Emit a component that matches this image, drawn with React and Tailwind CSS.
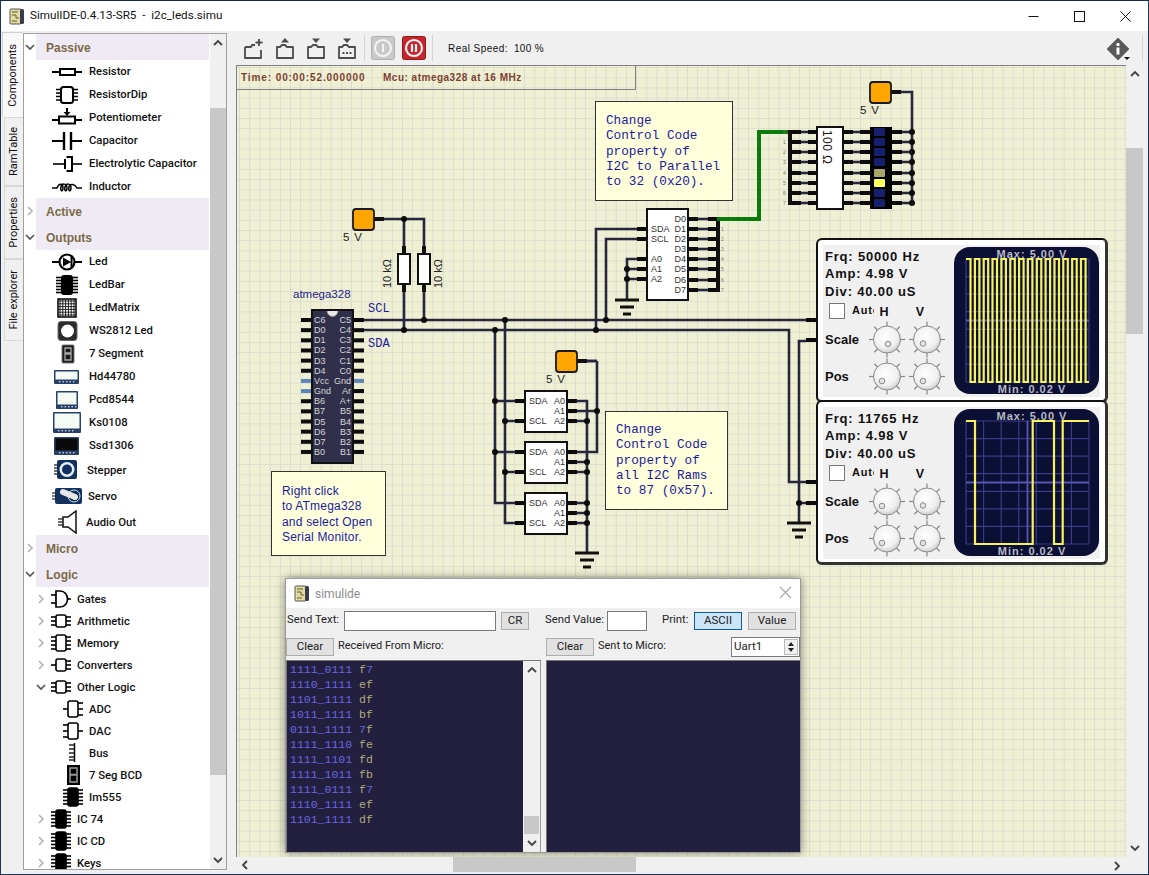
import React from "react";

const Svg = ({ w = 30, h = 22, children }) => (
  <svg width={w} height={h} viewBox={`0 0 ${w} ${h}`} className="shrink-0 block">{children}</svg>
);
const Ln = (p) => <line stroke="#000" strokeWidth="2" {...p} />;

const Chip = ({ l = 3, r = 3, top = 5, bot = 17, fill = false, w = 20, x0 = 0 }) => {
  const ys = (n) => n === 1 ? [(top + bot) / 2] : Array.from({ length: n }, (_, i) => top + 2 + (i * (bot - top - 4)) / (n - 1));
  return (
    <svg width={w} height="22" viewBox={`0 0 ${w} 22`} className="shrink-0 block">
      <g transform={`translate(${x0} 0)`}>
        {ys(l).map((y, i) => <line key={"l" + i} x1="0" x2="5" y1={y} y2={y} stroke="#000" strokeWidth="1.6" />)}
        {ys(r).map((y, i) => <line key={"r" + i} x1="15" x2="20" y1={y} y2={y} stroke="#000" strokeWidth="1.6" />)}
        <rect x="5" y={top} width="10" height={bot - top} rx="2" fill={fill ? "#000" : "#fff"} stroke="#000" strokeWidth="1.6" />
      </g>
    </svg>
  );
};

const Display = ({ x, y, w, h, dark }) => (
  <Svg>
    <rect x={x} y={y} width={w} height={h} rx="1" fill="#26406a" />
    <rect x={x + 1.5} y={y + 1.5} width={w - 3} height={h - 6} fill={dark ? "#0a0a0a" : "#f4fbf4"} />
    <g fill="#cfd8e4">
      {[0, 1, 2, 3, 4].map((i) => <rect key={i} x={x + 5 + i * 3.5} y={y + h - 3} width="1.4" height="1.4" />)}
    </g>
  </Svg>
);

const icons = {
  Resistor: <Svg><Ln x1="0" x2="8" y1="11" y2="11" /><rect x="8" y="8" width="15" height="6" fill="#fff" stroke="#000" strokeWidth="2" /><Ln x1="23" x2="30" y1="11" y2="11" /></Svg>,
  ResistorDip: <Svg><g stroke="#000" strokeWidth="1.5">{[5, 8.5, 12, 15.5].map((y) => <g key={y}><line x1="4" x2="9" y1={y + 0.5} y2={y + 0.5} /><line x1="21" x2="26" y1={y + 0.5} y2={y + 0.5} /></g>)}</g><rect x="9" y="3" width="12" height="16" rx="2.5" fill="#fff" stroke="#000" strokeWidth="2" /></Svg>,
  Potentiometer: <Svg><Ln x1="0" x2="7" y1="13" y2="13" /><rect x="7" y="9.5" width="16" height="7" fill="#fff" stroke="#000" strokeWidth="2" /><Ln x1="23" x2="30" y1="13" y2="13" /><Ln x1="15" x2="15" y1="1" y2="6" /><path d="M11.5 5 H18.5 L15 9 Z" fill="#000" /></Svg>,
  Capacitor: <Svg><Ln x1="0" x2="12" y1="11" y2="11" /><Ln x1="12" x2="12" y1="2" y2="20" strokeWidth="2.4" /><Ln x1="19" x2="19" y1="2" y2="20" strokeWidth="2.4" /><Ln x1="19" x2="30" y1="11" y2="11" /></Svg>,
  Electrolytic: <Svg><Ln x1="1" x2="13" y1="11" y2="11" strokeWidth="1.6" /><Ln x1="13" x2="13" y1="6" y2="16" /><path d="M14.5 4 H20 V18 H14.5" fill="none" stroke="#000" strokeWidth="2" /><Ln x1="20" x2="30" y1="11" y2="11" strokeWidth="1.6" /></Svg>,
  Inductor: <Svg><path d="M0 12 H5 C7 7 11 7 11 12 C11 16 8 16 9 11 C10 7 15 7 15 12 C15 16 12 16 13 11 C14 7 19 7 19 12 C19 16 16 16 17 11 C18 7 23 8 25 12 H30" fill="none" stroke="#000" strokeWidth="1.5" /></Svg>,
  Led: <Svg><Ln x1="0" x2="8" y1="11" y2="11" /><Ln x1="22" x2="30" y1="11" y2="11" /><circle cx="15" cy="11" r="7.5" fill="#fff" stroke="#000" strokeWidth="2.2" /><path d="M11 6.5 L19 11 L11 15.5 Z" fill="#000" /><Ln x1="19.5" x2="19.5" y1="6" y2="16" /></Svg>,
  LedBar: <Svg><g stroke="#000" strokeWidth="1.6">{[3.5, 6.5, 9.5, 12.5, 15.5, 18.5].map((y) => <line key={y} x1="4" x2="26" y1={y} y2={y} />)}</g><rect x="9" y="1" width="12" height="20" rx="3" fill="#000" /></Svg>,
  LedMatrix: <Svg><rect x="6" y="2" width="18" height="18" fill="#fff" stroke="#000" strokeWidth="1.5" />{[0, 1, 2, 3, 4, 5].map((i) => <g key={i} stroke="#222" strokeWidth="1"><line x1={8 + i * 2.8} x2={8 + i * 2.8} y1="2" y2="20" /><line y1={4 + i * 2.8} y2={4 + i * 2.8} x1="6" x2="24" /></g>)}</Svg>,
  WS: <Svg><rect x="6" y="1.5" width="19" height="19" rx="3" fill="#2c2c2c" stroke="#666" /><circle cx="15.5" cy="11" r="6.5" fill="#fff" /></Svg>,
  Seg: <Svg><rect x="10" y="2" width="12" height="18" rx="1" fill="#1a1a1a" stroke="#777" /><path d="M13 5 H19 V10 H13 Z M13 11 H19 V17 H13 Z" fill="none" stroke="#aaa" strokeWidth="1.3" /></Svg>,
  Hd: <Display x={2} y={4} w={25} h={14} />,
  Pcd: <Display x={4} y={2} w={22} h={18} />,
  Ks: <Display x={1} y={0} w={28} h={21} />,
  Ssd: <Display x={2} y={2} w={25} h={18} dark />,
  Stepper: <Svg h={24}><g stroke="#222" strokeWidth="1.3">{[7, 10, 13, 16].map((y) => <line key={y} x1="2" x2="6" y1={y} y2={y} />)}</g><rect x="5" y="2" width="20" height="19" rx="2" fill="#12315e" /><circle cx="15" cy="11.5" r="7.5" fill="#e6eef6" /><circle cx="15" cy="11.5" r="5" fill="#12315e" /></Svg>,
  Servo: <Svg h={22}><g stroke="#222" strokeWidth="1.2">{[8, 11, 14].map((y) => <line key={y} x1="0" x2="3" y1={y} y2={y} />)}</g><rect x="3" y="3" width="27" height="16" rx="2" fill="#12315e" /><circle cx="22" cy="11" r="6" fill="none" stroke="#cfe0ee" strokeWidth="1" /><line x1="11" y1="7" x2="23" y2="12" stroke="#e8e8e8" strokeWidth="6" strokeLinecap="round" /></Svg>,
  Audio: <Svg h={24}><g stroke="#222" strokeWidth="1.3">{[9, 12, 15].map((y) => <line key={y} x1="6" x2="11" y1={y} y2={y} />)}</g><path d="M11 7 H16 L24 1 V23 L16 17 H11 Z" fill="#fff" stroke="#111" strokeWidth="1.5" /></Svg>,
  Gates: <svg width="20" height="22" viewBox="0 0 20 22" className="shrink-0"><g stroke="#000" strokeWidth="1.6"><line x1="0" x2="5" y1="7" y2="7" /><line x1="0" x2="5" y1="15" y2="15" /><line x1="15" x2="20" y1="11" y2="11" /></g><path d="M5 3 H9 C19 3 19 19 9 19 H5 Z" fill="#fff" stroke="#000" strokeWidth="1.7" /></svg>,
  Arithmetic: <Chip />,
  Memory: <Chip l={4} r={4} top={3} bot={19} />,
  Converters: <Chip l={1} />,
  OtherLogic: <Chip />,
  ADC: <Chip l={1} top={3} bot={19} />,
  DAC: <Chip r={1} top={3} bot={19} />,
  Bus: <svg width="20" height="22" viewBox="0 0 20 22" className="shrink-0"><g stroke="#000" strokeWidth="1.3">{[3, 7, 11, 15, 18].map((y) => <line key={y} x1="6" x2="11" y1={y} y2={y} />)}</g><line x1="11.5" x2="11.5" y1="1" y2="20" stroke="#000" strokeWidth="1.5" /></svg>,
  SegBCD: <svg width="20" height="22" viewBox="0 0 20 22" className="shrink-0"><rect x="4" y="1" width="13" height="20" fill="#000" /><path d="M7 4 H14 V10.5 H7 Z M7 11 H14 V18 H7 Z" fill="none" stroke="#999" strokeWidth="1.5" /></svg>,
  Ic: <Chip l={5} r={5} top={2} bot={20} fill />,
};

const Chev = ({ open, light }) => (
  <svg width="12" height="12" viewBox="0 0 12 12" className="shrink-0">
    <polyline points={open ? "2,4 6,8 10,4" : "4,2 8,6 4,10"} fill="none" stroke={light ? "#b5b5b5" : "#555"} strokeWidth="1.7" />
  </svg>
);

const listText = "text-[11.3px] font-medium text-[#111] whitespace-nowrap pt-[2px] font-['Roboto',sans-serif]";

const Header = ({ label, open }) => (
  <div className="flex items-center h-[26px]">
    <Chev open={open} light={!open} />
    <div className="h-full w-[173px] bg-[#f0eaf4] flex items-center pl-[10px] pt-[2px] text-[12px] font-bold text-[#7b6a47]">{label}</div>
  </div>
);

const Item = ({ label, icon, h = "h-[23px]", gap = "gap-[7px]", pl = "pl-[28px]" }) => (
  <div className={`flex items-center ${h} ${gap} ${pl}`}>
    {icon}
    <span className={listText}>{label}</span>
  </div>
);

const Group = ({ label, icon, open }) => (
  <div className="flex items-center h-[22px] pl-[11px]">
    <Chev open={open} light={!open} />
    <div className="ml-[4px] mr-[6px]">{icon}</div>
    <span className={listText}>{label}</span>
  </div>
);

const Sub = ({ label, icon }) => (
  <div className="flex items-center h-[22px] pl-[39px] gap-[6px]">
    {icon}
    <span className={listText}>{label}</span>
  </div>
);

const Arrow = ({ up }) => (
  <div className="h-[17px] w-full flex items-center justify-center shrink-0">
    <svg width="10" height="7" viewBox="0 0 10 7">
      <polyline points={up ? "1,6 5,2 9,6" : "1,1 5,5 9,1"} fill="none" stroke="#444" strokeWidth="1.8" />
    </svg>
  </div>
);

const Tab = ({ label, h, on }) => (
  <div className={`${h} flex items-center justify-center ${on ? "ml-[1px] w-[21px] bg-[#f8f8f8] border-t border-l border-[#d0d0d0]" : "ml-[3px] w-[19px] bg-[#f0f0f0] border border-r-0 border-[#d8d8d8]"}`}>
    <span className="[writing-mode:vertical-rl] rotate-180 text-[11px] text-[#111] whitespace-nowrap font-['Roboto',sans-serif]">{label}</span>
  </div>
);

const Sep = ({ cls }) => <div className={`w-px h-[26px] bg-[#d4d4d4] ${cls}`} />;

const ToolIcon = ({ kind }) => (
  <svg width="22" height="24" viewBox="0 0 22 24" className="shrink-0">
    <path d={kind === "new" ? "M2 11 H8 L9 9 H12 M2 11 V22 H18 V14" : "M3 11 H6 L8 9 H11 L13 11 H19 V22 H3 Z"} fill="none" stroke="#4c4c4c" strokeWidth="1.8" strokeLinejoin="round" />
    {kind === "new" && <path d="M16 3 V10 M12.5 6.5 H19.5" stroke="#4c4c4c" strokeWidth="1.8" />}
    {kind === "up" && <path d="M11 2 L15 6.5 H7 Z" fill="#4c4c4c" />}
    {(kind === "down" || kind === "as") && <path d="M7 2.5 H15 L11 7 Z" fill="#4c4c4c" />}
    {kind === "as" && <path d="M6.5 17 H8.5 M10 17 H12 M13.5 17 H15.5" stroke="#4c4c4c" strokeWidth="2" />}
  </svg>
);

const PowerBtn = ({ red }) => (
  <svg width="24" height="24" viewBox="0 0 24 24" className="shrink-0">
    <rect x="0.5" y="0.5" width="23" height="23" rx="2" fill={red ? "#c9242c" : "#c9c9c9"} stroke={red ? "#8c1c1c" : "#b0b0b0"} />
    <circle cx="12" cy="12" r="8" fill="none" stroke="#f4f4f4" strokeWidth="2.2" />
    {red ? <path d="M10 8 V16 M14 8 V16" stroke="#f4f4f4" strokeWidth="2.2" /> : <path d="M12 8 V16" stroke="#f4f4f4" strokeWidth="2.2" />}
  </svg>
);

/* ---------- circuit ---------- */
const Wire = ({ d, color = "#26263c", w = 2.6 }) => <path d={d} fill="none" stroke={color} strokeWidth={w} strokeLinejoin="miter" />;
const Pin = ({ x1, x2, y, c = "#0c0c0c" }) => <line x1={x1} x2={x2} y1={y} y2={y} stroke={c} strokeWidth="4" />;
const Dot = ({ x, y }) => <circle cx={x} cy={y} r="3" fill="#0c0c0c" />;
const Gnd = ({ x, y }) => (
  <g stroke="#111">
    <line x1={x - 12} x2={x + 12} y1={y} y2={y} strokeWidth="3" />
    <line x1={x - 7} x2={x + 7} y1={y + 7} y2={y + 7} strokeWidth="3" />
    <line x1={x - 4} x2={x + 4} y1={y + 14} y2={y + 14} strokeWidth="3" />
  </g>
);
const Power = ({ x, y }) => (
  <g>
    <line x1={x + 21} x2={x + 31} y1={y + 10} y2={y + 10} stroke="#111" strokeWidth="4" />
    <rect x={x} y={y} width="21" height="21" rx="3" fill="#ffa500" stroke="#1a1a1a" strokeWidth="1.8" />
    <text x={x - 10} y={y + 32} fontSize="11.5" letterSpacing="0.8" fill="#222" fontFamily="'Liberation Sans',sans-serif">5 V</text>
  </g>
);
const Txt = ({ x, y, t, end, fill = "#333", size = 9 }) => (
  <text x={x} y={y + 3} fontSize={size} fill={fill} textAnchor={end ? "end" : "start"} fontFamily="'Liberation Sans',sans-serif">{t}</text>
);

const mcuL = ["C6", "D0", "D1", "D2", "D3", "D4", "Vcc", "Gnd", "B6", "B7", "D5", "D6", "D7", "B0"];
const mcuR = ["C5", "C4", "C3", "C2", "C1", "C0", "Gnd", "Ar", "A+", "B5", "B4", "B3", "B2", "B1"];
const mcuY = (i) => 320 + i * 10.15;

const Ram = ({ y }) => (
  <g>
    <Pin x1={515} x2={525} y={y + 10} />
    <Pin x1={515} x2={525} y={y + 30} />
    <Pin x1={567} x2={577} y={y + 10} />
    <Pin x1={567} x2={577} y={y + 20} />
    <Pin x1={567} x2={577} y={y + 30} />
    <rect x="525" y={y} width="42" height="41" fill="#fff" stroke="#111" strokeWidth="2" />
    <Txt x={529} y={y + 10} t="SDA" />
    <Txt x={529} y={y + 30} t="SCL" />
    <Txt x={565} y={y + 10} t="A0" end />
    <Txt x={565} y={y + 20} t="A1" end />
    <Txt x={565} y={y + 30} t="A2" end />
  </g>
);

const dY = [219, 229, 239, 249, 259, 269, 280, 290];
const bY = [132, 142, 152, 162, 173, 183, 193, 203];

const Circuit = () => (
  <svg width="889" height="791" viewBox="237 66 889 791" className="absolute left-0 top-0 block">
    <defs>
      <pattern id="grid" x="239.1" y="67.1" width="10.18" height="10.18" patternUnits="userSpaceOnUse">
        <path d="M0 0 H10.18 M0 0 V10.18" stroke="#d8d8d0" strokeWidth="1.6" fill="none" />
      </pattern>
    </defs>
    <rect x="237" y="66" width="889" height="791" fill="#eff0d3" />
    <rect x="237" y="66" width="889" height="791" fill="url(#grid)" />

    {/* top-left power and pull ups */}
    <Wire d="M384 219 H424 V254 M404 219 V254 M404 284 V330 M424 284 V320" />
    <Dot x={404} y={219} />
    <Power x={353} y={209} />
    {[404, 424].map((x) => (
      <g key={x}>
        <line x1={x} x2={x} y1="246" y2="254" stroke="#111" strokeWidth="4" />
        <line x1={x} x2={x} y1="284" y2="292" stroke="#111" strokeWidth="4" />
        <rect x={x - 6} y="254" width="12" height="30" fill="#fff" stroke="#111" strokeWidth="2" />
      </g>
    ))}
    <text transform="translate(391 288) rotate(-90)" fontSize="11" fill="#222" fontFamily="'Liberation Sans',sans-serif">10 kΩ</text>
    <text transform="translate(442 288) rotate(-90)" fontSize="11" fill="#222" fontFamily="'Liberation Sans',sans-serif">10 kΩ</text>

    {/* bus wires */}
    <Wire d="M364 320 H806 M364 330 H789 V482 H806" />
    <Wire d="M799 522 V341 H806 M799 503 H806" />
    <Wire d="M495 330 V503 H515 M505 320 V523 H515 M495 401 H515 M495 452 H515 M505 421 H515 M505 472 H515" />
    <Wire d="M596 330 V229 H637 M606 320 V239 H637" />
    <Wire d="M627 300 V259 H637 M627 269 H637 M627 279 H637" />
    <Wire d="M577 401 H587 V553 M577 421 H587 M577 462 H587 M577 472 H587 M577 503 H587 M577 513 H587 M577 523 H587" />
    <Wire d="M577 411 H597 M597 361 V452 H577 M587 361 H597" />

    {/* atmega */}
    {mcuL.map((t, i) => <Pin key={"pl" + i} x1={301} x2={312} y={mcuY(i)} c={i === 6 || i === 7 ? "#5b87b8" : "#0c0c0c"} />)}
    {mcuR.map((t, i) => <Pin key={"pr" + i} x1={353} x2={364} y={mcuY(i)} c={i === 6 ? "#5b87b8" : "#0c0c0c"} />)}
    <rect x="312" y="310" width="41" height="153" fill="#30304a" stroke="#111" strokeWidth="2" />
    <path d="M327 311 A5.5 5.5 0 0 0 338 311" fill="#e8e8e8" stroke="#888" strokeWidth="1" />
    {mcuL.map((t, i) => <Txt key={"tl" + i} x={314} y={mcuY(i)} t={t} fill="#d6d6d6" />)}
    {mcuR.map((t, i) => <Txt key={"tr" + i} x={351} y={mcuY(i)} t={t} end fill="#d6d6d6" />)}
    <text x="293" y="298" fontSize="11.5" fill="#1a1a8a" fontFamily="'Liberation Sans',sans-serif">atmega328</text>
    <text x="368" y="312" fontSize="12" fill="#1a1a9a" fontFamily="'Liberation Mono',monospace">SCL</text>
    <text x="368" y="347" fontSize="12" fill="#1a1a9a" fontFamily="'Liberation Mono',monospace">SDA</text>

    <Dot x={404} y={330} /><Dot x={424} y={320} /><Dot x={495} y={330} /><Dot x={505} y={320} />
    <Dot x={596} y={330} /><Dot x={606} y={320} />
    {[401, 452].map((y) => <Dot key={y} x={495} y={y} />)}
    {[421, 472].map((y) => <Dot key={y} x={505} y={y} />)}
    {[421, 462, 472, 503, 513, 523].map((y) => <Dot key={y} x={587} y={y} />)}
    <Dot x={597} y={411} />
    <Dot x={627} y={269} /><Dot x={627} y={279} />
    <Dot x={799} y={503} />

    {/* rams */}
    <Ram y={391} /><Ram y={442} /><Ram y={493} />
    <Gnd x={587} y={553} />
    <Power x={556} y={351} />
    <Wire d="M587 361 H597" />
    <Gnd x={799} y={523} />
    <Gnd x={627} y={300} />

    {/* i2c to parallel */}
    {[229, 239, 259, 269, 279].map((y) => <Pin key={y} x1={637} x2={647} y={y} />)}
    {dY.map((y) => (
      <g key={y}>
        <Pin x1={688} x2={698} y={y} />
        <Wire d={`M698 ${y} H708`} />
        <Pin x1={708} x2={718} y={y} />
      </g>
    ))}
    <rect x="647" y="209" width="41" height="91" fill="#fff" stroke="#111" strokeWidth="2" />
    {[["SDA", 229], ["SCL", 239], ["A0", 259], ["A1", 269], ["A2", 279]].map(([t, y]) => <Txt key={t} x={651} y={y} t={t} />)}
    {dY.map((y, i) => <Txt key={y} x={686} y={y} t={"D" + i} end />)}
    <line x1="718" x2="718" y1="217" y2="292" stroke="#111" strokeWidth="4" />
    {dY.map((y, i) => <text key={y} x="721" y={y + 2} fontSize="5" fill="#777">{i}</text>)}
    <path d="M717 219 H759 V132 H791" fill="none" stroke="#0a7a0a" strokeWidth="4" />

    {/* bar led */}
    <line x1="790" x2="790" y1="130" y2="205" stroke="#111" strokeWidth="4" />
    {bY.map((y, i) => <text key={y} x="783" y={y + 2} fontSize="5" fill="#777">{i}</text>)}
    {bY.map((y) => (
      <g key={y}>
        <Pin x1={791} x2={801} y={y} />
        <Wire d={`M801 ${y} H808`} />
        <Pin x1={808} x2={817} y={y} />
        <Pin x1={843} x2={853} y={y} />
        <Wire d={`M853 ${y} H860`} />
        <Pin x1={860} x2={870} y={y} />
        <Pin x1={892} x2={902} y={y} />
        <Wire d={`M902 ${y} H912`} />
      </g>
    ))}
    <rect x="817" y="127" width="26" height="82" fill="#fff" stroke="#111" strokeWidth="2" />
    <text transform="translate(823 130) rotate(90)" fontSize="12" letterSpacing="0.4" fill="#111" fontFamily="'Liberation Sans',sans-serif">100 Ω</text>
    <rect x="870" y="127" width="22" height="82" fill="#000" />
    {bY.map((y, i) => <rect key={y} x="874" y={y - 4} width="11" height="8" rx="1" fill={i === 4 ? "#a9a66a" : i === 5 ? "#ffff60" : "#16206e"} />)}
    <Wire d="M901 92 H912 V203" />
    {bY.map((y) => <Dot key={y} x={912} y={y} />)}
    <Power x={870} y={82} />

    {/* scope inputs */}
    {[320, 340, 482, 503].map((y) => <Pin key={y} x1={806} x2={816} y={y} />)}
  </svg>
);

const Note = ({ cls, children }) => (
  <div className={`absolute bg-[#ffffdc] border border-[#333] text-[#1a1a9e] whitespace-pre ${cls}`}>{children}</div>
);

const Dial = ({ dx, dy }) => (
  <svg width="36" height="37" viewBox="-18 -18.5 36 37" className="block shrink-0 overflow-visible">
    <defs>
      <radialGradient id="knob" cx="45%" cy="40%" r="65%">
        <stop offset="0%" stopColor="#ffffff" />
        <stop offset="65%" stopColor="#f0f0f0" />
        <stop offset="100%" stopColor="#c4c4c4" />
      </radialGradient>
    </defs>
    {[0, 45, 90, 135, 180, 225, 270, 315].map((a) => (
      <line key={a} x1="0" x2="0" y1="-12" y2="-18" stroke="#888" strokeWidth="1.2" transform={`rotate(${a})`} />
    ))}
    <circle r="13.5" fill="url(#knob)" stroke="#8a8a8a" strokeWidth="1" />
    <circle cx={dx} cy={dy} r="2.8" fill="#e4e4e4" stroke="#8c8c8c" strokeWidth="1" />
  </svg>
);

const wave1 = () => {
  let d = "M12 12";
  for (let k = 0; k < 14; k++) {
    const f = 16.5 + k * 8.85;
    const r = 12 + (k + 1) * 8.85;
    d += ` H${f.toFixed(1)} V135 H${Math.min(r, 135).toFixed(1)}`;
    if (r < 134) d += " V12";
  }
  return d;
};
const wave2 = "M12 12 H21 V135 H78.7 V12 H100 V135 H108.7 V12 H135";

const Screen = ({ wave }) => (
  <svg width="145" height="147" viewBox="0 0 145 147" className="block shrink-0">
    <rect x="0" y="0" width="145" height="147" rx="16" fill="#0b0f33" />
    {Array.from({ length: 8 }, (_, i) => 12 + i * 17.57).map((p) => (
      <g key={p} stroke="#3a3a86" strokeWidth="1.2">
        <line x1={p} x2={p} y1="12" y2="135" />
        <line y1={p} y2={p} x1="12" x2="135" />
      </g>
    ))}
    <line x1="73.5" x2="73.5" y1="12" y2="135" stroke="#5757b0" strokeWidth="1.8" />
    <line y1="73.5" y2="73.5" x1="12" x2="135" stroke="#5757b0" strokeWidth="1.8" />
    <path d={wave} fill="none" stroke="#f5f25e" strokeWidth="2.2" />
    <text x="78" y="11" textAnchor="middle" fontSize="11" fontWeight="700" letterSpacing="1" fill="#b9b9c6" fontFamily="'Liberation Sans',sans-serif">Max: 5.00 V</text>
    <text x="78" y="146" textAnchor="middle" fontSize="11" fontWeight="700" letterSpacing="1" fill="#b9b9c6" fontFamily="'Liberation Sans',sans-serif">Min: 0.02 V</text>
  </svg>
);

const Scope = ({ cls, frq, wave, firstX }) => (
  <div className={`absolute left-[579px] w-[292px] h-[165px] bg-white border-2 border-[#111] border-r-[3px] border-b-[3px] border-r-[#333] border-b-[#333] rounded-md p-[5px] ${cls}`}>
    <div className="bg-[#f0f0f0] w-[277px] h-[152px] flex">
      <div className="w-[131px] pl-[2px] pt-[3px] shrink-0 text-[#111] font-bold">
        <div className="text-[13px] tracking-[0.8px] leading-[17.4px] whitespace-nowrap">Frq: {frq} Hz</div>
        <div className="text-[13px] tracking-[0.8px] leading-[17.4px] whitespace-nowrap">Amp: 4.98 V</div>
        <div className="text-[13px] tracking-[0.8px] leading-[17.4px] whitespace-nowrap">Div: 40.00 uS</div>
        <div className="flex items-center h-[21px] relative">
          <div className="ml-[4px] w-[16px] h-[16px] bg-white border border-[#777]" />
          <div className="ml-[7px] w-[22px] overflow-hidden text-[11px] tracking-[0.8px] whitespace-nowrap">Auto</div>
          <div className="ml-[3px] w-[14px] text-center text-[12.5px] mt-[4px]">H</div>
          <div className="ml-[22px] w-[14px] text-center text-[12.5px] mt-[4px]">V</div>
        </div>
        <div className="flex items-center h-[37px]">
          <div className="w-[44px] text-[13px]">Scale</div>
          <Dial dx={firstX} dy={4.5} />
          <div className="w-[4px]" />
          <Dial dx={-4} dy={4} />
        </div>
        <div className="flex items-center h-[37px]">
          <div className="w-[44px] text-[13px]">Pos</div>
          <Dial dx={-5} dy={4.5} />
          <div className="w-[4px]" />
          <Dial dx={-4} dy={4.5} />
        </div>
      </div>
      <div className="pt-[2px]"><Screen wave={wave} /></div>
    </div>
  </div>
);

const Btn = ({ cls, children, on }) => (
  <div className={`flex items-center justify-center h-[18px] shrink-0 text-[11.5px] text-[#222] border ${on ? "bg-[#cce4f7] border-[#0a5c9e]" : "bg-[#e1e1e1] border-[#adadad]"} ${cls}`}>{children}</div>
);

const log = ["1111_0111 f7", "1110_1111 ef", "1101_1111 df", "1011_1111 bf", "0111_1111 7f", "1111_1110 fe", "1111_1101 fd", "1111_1011 fb", "1111_0111 f7", "1110_1111 ef", "1101_1111 df"];

const AppIcon = () => (
  <svg width="16" height="17" viewBox="0 0 16 17" className="shrink-0 block">
    <rect x="1" y="1" width="11" height="15" rx="1" fill="#e3dca0" stroke="#555" />
    <rect x="11" y="1" width="4" height="15" rx="1.5" fill="#3a3a4e" />
    <path d="M3 4 H9 M3 7 H7 V10 H10 M3 13 H8" stroke="#5c5c30" strokeWidth="1" fill="none" />
  </svg>
);

const Dialog = () => (
  <div className="absolute left-[48px] top-[512px] w-[516px] h-[275px] bg-[#f0f0f0] border border-[#9a9a9a] shadow-[0_0_9px_rgba(0,0,0,0.45)] flex flex-col font-['Roboto',sans-serif] text-[#222]">
    <div className="h-[29px] bg-white flex items-center pl-[8px] pr-[7px] shrink-0">
      <AppIcon />
      <span className="ml-[5px] text-[12px] text-[#8c8c8c]">simulide</span>
      <svg width="13" height="13" viewBox="0 0 13 13" className="ml-auto mr-[1px] mb-[2px]"><path d="M1 1 L12 12 M12 1 L1 12" stroke="#a8a8a8" strokeWidth="1.1" /></svg>
    </div>
    <div className="h-[25px] flex items-center shrink-0 text-[11.3px]">
      <span className="w-[58px] pl-[1px] shrink-0">Send Text:</span>
      <div className="w-[152px] h-[20px] bg-white border border-[#7a7a7a] shrink-0" />
      <Btn cls="ml-[5px] w-[28px]">CR</Btn>
      <span className="ml-[16px] w-[62px] shrink-0 whitespace-nowrap">Send Value:</span>
      <div className="w-[40px] h-[20px] bg-white border border-[#7a7a7a] shrink-0" />
      <span className="ml-[15px] w-[32px] shrink-0">Print:</span>
      <Btn on cls="w-[48px]">ASCII</Btn>
      <Btn cls="ml-[6px] w-[48px]">Value</Btn>
    </div>
    <div className="h-[27px] flex items-center shrink-0 text-[11px]">
      <div className="w-[260px] flex items-center shrink-0">
        <Btn cls="w-[48px]">Clear</Btn>
        <span className="ml-[4px] whitespace-nowrap">Received From Micro:</span>
      </div>
      <div className="flex-1 flex items-center">
        <Btn cls="w-[48px]">Clear</Btn>
        <span className="ml-[4px] whitespace-nowrap">Sent to Micro:</span>
        <div className="ml-auto w-[69px] h-[20px] bg-white border border-[#7a7a7a] flex items-center pl-[2px]">
          <span className="text-[11.5px]">Uart1</span>
          <div className="ml-auto mr-[1px] w-[14px] h-[16px] bg-[#f0f0f0] border border-[#bbb] flex flex-col items-center justify-center gap-[2px]">
            <span className="w-0 h-0 border-x-[3.5px] border-x-transparent border-b-[4px] border-b-[#222]" />
            <span className="w-0 h-0 border-x-[3.5px] border-x-transparent border-t-[4px] border-t-[#222]" />
          </div>
        </div>
      </div>
    </div>
    <div className="flex-1 flex min-h-0">
      <div className="w-[255px] bg-[#231f3f] border-t border-l border-[#777] flex font-['Liberation_Mono',monospace]">
        <div className="flex-1 pl-[3px] pt-[1px] text-[11.5px] leading-[15px] overflow-hidden">
          {log.map((l, i) => {
            const [b, h] = l.split(" ");
            return (
              <div key={i} className="whitespace-pre text-[#6868e0]">
                {b}{" "}
                {h.split("").map((c, j) => <span key={j} className={/[0-9]/.test(c) ? "text-[#6868e0]" : "text-[#aeae78]"}>{c}</span>)}
              </div>
            );
          })}
        </div>
        <div className="w-[18px] bg-[#f0f0f0] flex flex-col border-r border-[#9a9a9a]">
          <Arrow up />
          <div className="mt-[138px] h-[18px] bg-[#c8c8c8] mx-[1px]" />
          <div className="mt-auto"><Arrow /></div>
        </div>
      </div>
      <div className="ml-[5px] w-[254px] bg-[#231f3f] border-t border-l border-[#777]" />
    </div>
  </div>
);

export default function App() {
  return (
    <div className="w-[1149px] h-[875px] border border-[#1c3557] border-t-[#14284a] bg-[#f0f0f0] flex flex-col overflow-hidden font-['Liberation_Sans',sans-serif]">
      {/* title bar */}
      <div className="h-[30px] bg-white flex items-center shrink-0 pl-[8px]">
        <AppIcon />
        <span className="ml-[5px] text-[11.7px] text-[#111] whitespace-pre font-['Roboto',sans-serif]">SimulIDE-0.4.13-SR5  -  i2c_leds.simu</span>
        <div className="ml-auto flex">
          <div className="w-[46px] h-[30px] flex items-center justify-center"><svg width="11" height="11" viewBox="0 0 11 11"><path d="M0.5 5.5 H10.5" stroke="#111" /></svg></div>
          <div className="w-[46px] h-[30px] flex items-center justify-center"><svg width="11" height="11" viewBox="0 0 11 11"><rect x="0.5" y="0.5" width="10" height="10" fill="none" stroke="#111" /></svg></div>
          <div className="w-[46px] h-[30px] flex items-center justify-center"><svg width="11" height="11" viewBox="0 0 11 11"><path d="M0.5 0.5 L10.5 10.5 M10.5 0.5 L0.5 10.5" stroke="#111" /></svg></div>
        </div>
      </div>

      <div className="flex-1 flex min-h-0">
        {/* tabs */}
        <div className="w-[22px] shrink-0 pt-[1px] flex flex-col">
          <Tab label="Components" h="h-[85px]" on />
          <Tab label="RamTable" h="h-[69px]" />
          <Tab label="Properties" h="h-[73px]" />
          <Tab label="File explorer" h="h-[82px]" />
        </div>

        {/* component list */}
        <div className="w-[204px] shrink-0 mt-[2px] mb-[4px] border border-[#a0a0a0] bg-white flex">
          <div className="w-[186px] overflow-hidden shrink-0">
            <Header label="Passive" open />
            <Item label="Resistor" icon={icons.Resistor} />
            <Item label="ResistorDip" icon={icons.ResistorDip} />
            <Item label="Potentiometer" icon={icons.Potentiometer} />
            <Item label="Capacitor" icon={icons.Capacitor} />
            <Item label="Electrolytic Capacitor" icon={icons.Electrolytic} />
            <Item label="Inductor" icon={icons.Inductor} />
            <Header label="Active" />
            <Header label="Outputs" open />
            <Item label="Led" icon={icons.Led} />
            <Item label="LedBar" icon={icons.LedBar} />
            <Item label="LedMatrix" icon={icons.LedMatrix} />
            <Item label="WS2812 Led" icon={icons.WS} />
            <Item label="7 Segment" icon={icons.Seg} />
            <Item label="Hd44780" icon={icons.Hd} />
            <Item label="Pcd8544" icon={icons.Pcd} />
            <Item label="Ks0108" icon={icons.Ks} />
            <Item label="Ssd1306" icon={icons.Ssd} />
            <Item label="Stepper" icon={icons.Stepper} h="h-[26px]" gap="gap-[5px]" />
            <Item label="Servo" icon={icons.Servo} h="h-[26px]" gap="gap-[6px]" />
            <Item label="Audio Out" icon={icons.Audio} h="h-[26px]" gap="gap-[4px]" />
            <Header label="Micro" />
            <Header label="Logic" open />
            <div className="h-[1px]" />
            <Group label="Gates" icon={icons.Gates} />
            <Group label="Arithmetic" icon={icons.Arithmetic} />
            <Group label="Memory" icon={icons.Memory} />
            <Group label="Converters" icon={icons.Converters} />
            <Group label="Other Logic" icon={icons.OtherLogic} open />
            <Sub label="ADC" icon={icons.ADC} />
            <Sub label="DAC" icon={icons.DAC} />
            <Sub label="Bus" icon={icons.Bus} />
            <Sub label="7 Seg BCD" icon={icons.SegBCD} />
            <Sub label="Im555" icon={icons.Ic} />
            <Group label="IC 74" icon={icons.Ic} />
            <Group label="IC CD" icon={icons.Ic} />
            <Group label="Keys" icon={icons.Ic} />
          </div>
          <div className="w-[16px] bg-[#f0f0f0] flex flex-col">
            <Arrow up />
            <div className="mt-[57px] h-[667px] bg-[#c8c8c8]" />
            <div className="mt-auto"><Arrow /></div>
          </div>
        </div>

        <div className="w-[9px] shrink-0" />

        {/* main */}
        <div className="flex-1 flex flex-col min-w-0">
          <div className="h-[34px] shrink-0 flex items-center pl-[7px]">
            <div className="flex gap-[9px]">
              <ToolIcon kind="new" /><ToolIcon kind="up" /><ToolIcon kind="down" /><ToolIcon kind="as" />
            </div>
            <Sep cls="ml-[6px]" />
            <div className="ml-[6px] flex gap-[7px]"><PowerBtn /><PowerBtn red /></div>
            <Sep cls="ml-[6px]" />
            <span className="ml-[15px] text-[10px] tracking-[0.45px] text-[#111] whitespace-nowrap">Real Speed:</span>
            <span className="ml-[6px] text-[10px] tracking-[0.3px] text-[#111] whitespace-nowrap">100 %</span>
            <div className="ml-auto relative mr-[15px] w-[20px] h-[20px]">
              <svg width="22" height="22" viewBox="0 0 22 22" className="block">
                <path d="M11 1 L21 11 L11 21 L1 11 Z" fill="#5a5a5a" stroke="#5a5a5a" strokeWidth="2" strokeLinejoin="round" />
                <circle cx="11" cy="6.5" r="1.7" fill="#fff" />
                <rect x="9.5" y="9.5" width="3" height="7" fill="#fff" />
              </svg>
              <span className="absolute left-[17px] top-[19px] w-0 h-0 border-x-[3px] border-x-transparent border-t-[3.5px] border-t-[#111]" />
            </div>
            <Sep cls="mr-[5px]" />
          </div>

          <div className="flex-1 flex min-h-0">
            <div className="w-[890px] shrink-0 flex flex-col">
              <div className="flex-1 relative overflow-hidden border-t border-l border-[#808080]">
                <Circuit />
                <div className="absolute left-0 top-0 w-[399px] h-[24px] border-r border-b border-[#808080] flex items-center text-[10px] font-bold tracking-[0.9px] text-[#7b3f30] whitespace-nowrap">
                  <span className="ml-[4px] w-[142px] shrink-0">Time: 00:00:52.000000</span>
                  <span className="shrink-0 tracking-[0.5px]">Mcu: atmega328 at 16 MHz</span>
                </div>
                <Note cls="left-[358px] top-[35px] w-[138px] h-[100px] pl-[10px] pt-[11px] text-[12.7px] leading-[15.3px] font-['Liberation_Mono',monospace]">{"Change\nControl Code\nproperty of\nI2C to Parallel\nto 32 (0x20)."}</Note>
                <Note cls="left-[368px] top-[345px] w-[123px] h-[99px] pl-[10px] pt-[10px] text-[12.7px] leading-[15.3px] font-['Liberation_Mono',monospace]">{"Change\nControl Code\nproperty of\nall I2C Rams\nto 87 (0x57)."}</Note>
                <Note cls="left-[34px] top-[405px] w-[115px] h-[85px] pl-[10px] pt-[12px] text-[12px] tracking-[0.2px] leading-[15.3px]">{"Right click\nto ATmega328\nand select Open\nSerial Monitor."}</Note>
                <Scope cls="top-[172px]" frq="50000" wave={wave1()} firstX={1} />
                <Scope cls="top-[334px]" frq="11765" wave={wave2} firstX={-5} />
                <Dialog />
              </div>
              <div className="h-[17px] shrink-0 bg-[#f0f0f0] flex items-start">
                <div className="w-[17px] shrink-0 rotate-[-90deg]"><Arrow up /></div>
                <div className="ml-[200px] w-[183px] h-[15px] bg-[#c8c8c8]" />
                <div className="ml-auto w-[17px] shrink-0 rotate-90"><Arrow up /></div>
              </div>
            </div>
            <div className="w-[17px] shrink-0 bg-[#f0f0f0] flex flex-col pb-[17px]">
              <Arrow up />
              <div className="mt-[66px] h-[186px] bg-[#c8c8c8]" />
              <div className="mt-auto"><Arrow /></div>
            </div>
            <div className="flex-1" />
          </div>
        </div>
      </div>
    </div>
  );
}
